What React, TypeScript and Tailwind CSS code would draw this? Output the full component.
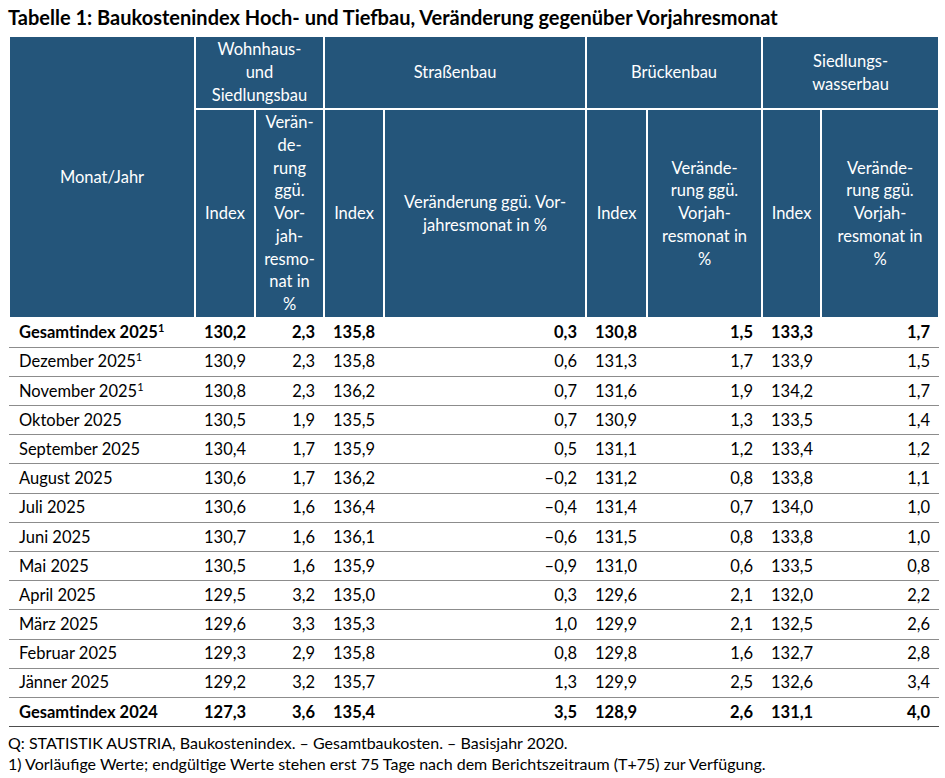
const rows: { label: string; note?: boolean; bold?: boolean; v: string[] }[] = [
  { label: "Gesamtindex 2025", note: true, bold: true, v: ["130,2", "2,3", "135,8", "0,3", "130,8", "1,5", "133,3", "1,7"] },
  { label: "Dezember 2025", note: true, v: ["130,9", "2,3", "135,8", "0,6", "131,3", "1,7", "133,9", "1,5"] },
  { label: "November 2025", note: true, v: ["130,8", "2,3", "136,2", "0,7", "131,6", "1,9", "134,2", "1,7"] },
  { label: "Oktober 2025", v: ["130,5", "1,9", "135,5", "0,7", "130,9", "1,3", "133,5", "1,4"] },
  { label: "September 2025", v: ["130,4", "1,7", "135,9", "0,5", "131,1", "1,2", "133,4", "1,2"] },
  { label: "August 2025", v: ["130,6", "1,7", "136,2", "–0,2", "131,2", "0,8", "133,8", "1,1"] },
  { label: "Juli 2025", v: ["130,6", "1,6", "136,4", "–0,4", "131,4", "0,7", "134,0", "1,0"] },
  { label: "Juni 2025", v: ["130,7", "1,6", "136,1", "–0,6", "131,5", "0,8", "133,8", "1,0"] },
  { label: "Mai 2025", v: ["130,5", "1,6", "135,9", "–0,9", "131,0", "0,6", "133,5", "0,8"] },
  { label: "April 2025", v: ["129,5", "3,2", "135,0", "0,3", "129,6", "2,1", "132,0", "2,2"] },
  { label: "März 2025", v: ["129,6", "3,3", "135,3", "1,0", "129,9", "2,1", "132,5", "2,6"] },
  { label: "Februar 2025", v: ["129,3", "2,9", "135,8", "0,8", "129,8", "1,6", "132,7", "2,8"] },
  { label: "Jänner 2025", v: ["129,2", "3,2", "135,7", "1,3", "129,9", "2,5", "132,6", "3,4"] },
  { label: "Gesamtindex 2024", bold: true, v: ["127,3", "3,6", "135,4", "3,5", "128,9", "2,6", "131,1", "4,0"] },
];

const widths = [186, 60, 69, 60, 202, 61, 115, 59, 118];

const th = "border-2 border-white bg-[#24557a] text-center align-middle font-normal text-white";

export default function App() {
  return (
    <div
      className="w-[945px] h-[778px] bg-white px-2 pt-[4px] text-black"
      style={{ fontFamily: "Lato, 'Open Sans', sans-serif" }}
    >
      <h1 className="text-[20px] font-bold leading-[26px] whitespace-nowrap">
        Tabelle 1: Baukostenindex Hoch- und Tiefbau, Veränderung gegenüber Vorjahresmonat
      </h1>

      <table className="mt-[5px] w-[930px] table-fixed border-collapse text-[16.5px]">
        <colgroup>
          {widths.map((w, i) => (
            <col key={i} style={{ width: w }} />
          ))}
        </colgroup>
        <thead className="leading-[22.7px]">
          <tr className="h-[73px]">
            <th rowSpan={2} className={th}>Monat/Jahr</th>
            <th colSpan={2} className={th}>
              Wohnhaus-
              <br />
              und
              <br />
              Siedlungsbau
            </th>
            <th colSpan={2} className={th}>Straßenbau</th>
            <th colSpan={2} className={th}>Brückenbau</th>
            <th colSpan={2} className={th}>
              Siedlungs-
              <br />
              wasserbau
            </th>
          </tr>
          <tr className="h-[209px]">
            <th className={th}>Index</th>
            <th className={th}>
              Verän-<br />de-<br />rung<br />ggü.<br />Vor-<br />jah-<br />resmo-<br />nat in<br />%
            </th>
            <th className={th}>Index</th>
            <th className={`${th} whitespace-nowrap`}>
              Veränderung ggü. Vor-
              <br />
              jahresmonat in %
            </th>
            <th className={th}>Index</th>
            <th className={`${th} whitespace-nowrap`}>
              Verände-<br />rung ggü.<br />Vorjah-<br />resmonat in<br />%
            </th>
            <th className={th}>Index</th>
            <th className={`${th} whitespace-nowrap`}>
              Verände-<br />rung ggü.<br />Vorjah-<br />resmonat in<br />%
            </th>
          </tr>
        </thead>
        <tbody>
          {rows.map((r, i) => (
            <tr
              key={r.label}
              className={`h-[29.2px] border-b ${i === rows.length - 1 ? "border-[#4d4d4d]" : "border-[#8c8c8c]"} ${r.bold ? "font-bold" : ""}`}
            >
              <td className="pl-[10px] whitespace-nowrap">
                {r.label}
                {r.note && <span className="relative -top-[6px] text-[11px]">1</span>}
              </td>
              {r.v.map((v, j) => (
                <td
                  key={j}
                  className={`whitespace-nowrap ${j % 2 === 0 ? "pl-[9px] text-left" : "pr-[9px] text-right"}`}
                >
                  {v}
                </td>
              ))}
            </tr>
          ))}
        </tbody>
      </table>

      <div className="mt-[5px] text-[16px] leading-[21px]">
        <p>Q: STATISTIK AUSTRIA, Baukostenindex. – Gesamtbaukosten. – Basisjahr 2020.</p>
        <p>1) Vorläufige Werte; endgültige Werte stehen erst 75 Tage nach dem Berichtszeitraum (T+75) zur Verfügung.</p>
      </div>
    </div>
  );
}
